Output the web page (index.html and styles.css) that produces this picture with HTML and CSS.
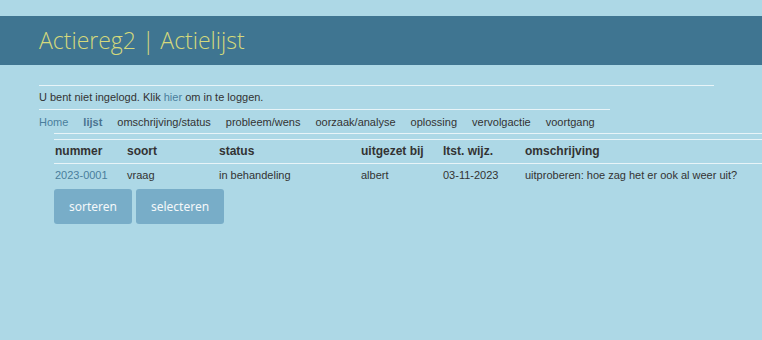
FILE: index.html
```html
<!DOCTYPE html>
<html lang="nl">
<head>
    <meta charset="UTF-8">
    <meta name="viewport" content="width=device-width, initial-scale=1.0">
    <title>Actiereg2 | Actielijst</title>
    <link rel="stylesheet" href="styles.css">
</head>
<body>
    <header>
        <h1>Actiereg2 | Actielijst</h1>
    </header>
    <main>
        <p class="login">U bent niet ingelogd. Klik <a href="#">hier</a> om in te loggen.</p>
        <nav>
            <a href="#" class="home">Home</a>
            <span class="current">lijst</span>
            <a href="#">omschrijving/status</a>
            <a href="#">probleem/wens</a>
            <a href="#">oorzaak/analyse</a>
            <a href="#">oplossing</a>
            <a href="#">vervolgactie</a>
            <a href="#">voortgang</a>
        </nav>
        <div class="lijst">
            <table>
                <thead>
                    <tr>
                        <th class="c1">nummer</th>
                        <th class="c2">soort</th>
                        <th class="c3">status</th>
                        <th class="c4">uitgezet bij</th>
                        <th class="c5">ltst. wijz.</th>
                        <th>omschrijving</th>
                    </tr>
                </thead>
                <tbody>
                    <tr>
                        <td><a href="#">2023-0001</a></td>
                        <td>vraag</td>
                        <td>in behandeling</td>
                        <td>albert</td>
                        <td>03-11-2023</td>
                        <td>uitproberen: hoe zag het er ook al weer uit?</td>
                    </tr>
                </tbody>
            </table>
            <div class="knoppen">
                <button type="button">sorteren</button>
                <button type="button">selecteren</button>
            </div>
        </div>
    </main>
</body>
</html>
```

FILE: styles.css
```css
body { margin: 0; background-color: #ADD8E6; color: #333; font-family: "Liberation Sans", Arial, sans-serif; font-size: 11px; overflow-x: hidden; }
header { margin-top: 16px; height: 49px; background-color: #3F7591; padding-left: 39px; }
h1 { margin: 0; font-family: "Open Sans", sans-serif; font-weight: 300; font-size: 23px; line-height: 49px; color: #D5D97C; }
a { color: #4A7E9C; text-decoration: none; }
main { padding-left: 39px; }
.login { width: 675px; margin: 20px 0 0; border-top: 1px solid #E8F4F8; padding: 5px 0 5px; line-height: 13px; }
nav { display: inline-flex; border-top: 1px solid #E8F4F8; padding: 6px 0 4px; line-height: 13px; }
nav a, nav span { margin-right: 15px; color: #333; }
nav .home { color: #4A7E9C; }
nav .current { font-weight: bold; color: #4A7390; }
.lijst { margin-left: 15px; border-top: 1px solid #E8F4F8; padding-top: 5px; }
table { width: 100%; border-collapse: collapse; border-top: 1px solid #E8F4F8; }
th { text-align: left; font-size: 12px; line-height: 14px; padding: 4px 1px 5px; border-bottom: 1px solid #E8F4F8; }
td { line-height: 13px; padding: 5px 1px 4px; }
.c1 { width: 70px; }
.c2 { width: 90px; }
.c3 { width: 140px; }
.c4 { width: 80px; }
.c5 { width: 80px; }
.knoppen { display: flex; gap: 4px; margin-top: 3px; }
button { height: 35px; padding: 0 15px; border: none; border-radius: 3px; background-color: #78ADC8; color: #F4F8FA; font-family: "Noto Sans", sans-serif; font-size: 12px; cursor: pointer; }
button:hover { background-color: #6A9FBB; }
```
